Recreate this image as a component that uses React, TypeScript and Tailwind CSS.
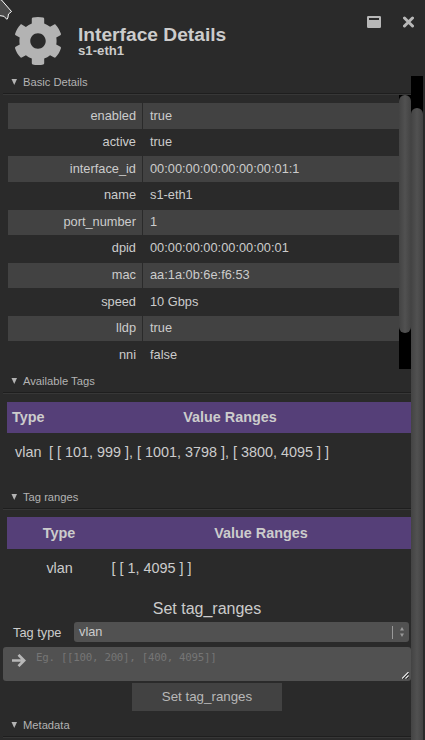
import React from "react";

const details: [string, string][] = [
  ["enabled", "true"],
  ["active", "true"],
  ["interface_id", "00:00:00:00:00:00:00:01:1"],
  ["name", "s1-eth1"],
  ["port_number", "1"],
  ["dpid", "00:00:00:00:00:00:00:01"],
  ["mac", "aa:1a:0b:6e:f6:53"],
  ["speed", "10 Gbps"],
  ["lldp", "true"],
  ["nni", "false"],
];

function SectionTitle({ children }: { children: React.ReactNode }) {
  return (
    <div className="ml-[3px] h-[19px] shrink-0 border-b border-[#373737]">
      <div className="flex h-[18px] items-start border-b border-[#1e1e1e] pl-[8px] text-[11.2px] leading-[13px] text-[#b3b3b3]">
        <svg className="mr-[6px] mt-[3px] h-[6px] w-[6px] shrink-0" viewBox="0 0 6 6">
          <path d="M0.500 0H6L3.250 6Z" fill="#b3b3b3" />
        </svg>
        <span>{children}</span>
      </div>
    </div>
  );
}

function Thumb({ className }: { className: string }) {
  return (
    <div
      className={
        "w-[12px] bg-linear-to-r from-[#434343] via-[#515151] to-[#434343] " + className
      }
    />
  );
}

export default function App() {
  return (
    <div
      className="relative flex h-[740px] w-[425px] flex-col overflow-hidden bg-[#2a2a2a] text-[#cccccc]"
      style={{ fontFamily: '"Liberation Sans", Arial, sans-serif' }}
    >
      <svg className="absolute left-0 top-0 h-[22px] w-[14px]" viewBox="0 0 14 22">
        <path d="M-1 -1L1.5 0L11.500 11.500L8.500 14L7.800 18L6.800 19.300L4 16.300L-1 15.500Z" fill="#4a4a4a" stroke="#fff" strokeWidth="1" />
      </svg>

      <header className="flex h-[76px] shrink-0">
        <svg className="ml-[15px] mt-[17px] h-[48px] w-[46px]" viewBox="18.6 8 475 496" preserveAspectRatio="none">
          <path
            fill="#b3b3b3"
            d="M487.4 315.7l-42.6-24.6c4.3-23.2 4.3-47 0-70.2l42.6-24.6c4.9-2.8 7.1-8.6 5.5-14-11.1-35.6-30-67.8-54.7-94.6-3.800-4.100-10-5.100-14.800-2.300L380.800 110c-17.900-15.400-38.500-27.300-60.800-35.100V25.800c0-5.600-3.900-10.500-9.400-11.700-36.700-8.200-74.300-7.800-109.200 0-5.500 1.200-9.400 6.100-9.400 11.700V75c-22.200 7.900-42.800 19.800-60.800 35.100L88.700 85.500c-4.900-2.800-11-1.900-14.800 2.300-24.700 26.700-43.600 58.900-54.700 94.600-1.700 5.400.6 11.200 5.500 14L67.300 221c-4.300 23.200-4.300 47 0 70.200l-42.600 24.600c-4.900 2.800-7.100 8.600-5.500 14 11.100 35.600 30 67.800 54.700 94.600 3.800 4.100 10 5.100 14.800 2.300l42.600-24.600c17.900 15.400 38.500 27.300 60.800 35.100v49.200c0 5.600 3.900 10.500 9.400 11.700 36.700 8.200 74.300 7.800 109.200 0 5.500-1.200 9.400-6.100 9.400-11.700v-49.200c22.200-7.900 42.800-19.800 60.800-35.100l42.600 24.600c4.900 2.800 11 1.900 14.800-2.300 24.700-26.700 43.600-58.900 54.700-94.600 1.500-5.500-.7-11.300-5.600-14.100zM256 336c-44.100 0-80-35.900-80-80s35.900-80 80-80 80 35.900 80 80-35.900 80-80 80z"
          />
        </svg>
        <div className="ml-[17px] mt-[25px] flex-1 font-bold">
          <h1 className="text-[19.2px] leading-[19px]">Interface Details</h1>
          <h2 className="text-[13.2px] leading-[13px]">s1-eth1</h2>
        </div>
        <svg className="mt-[15px] h-[13px] w-[14px]" viewBox="0 0 14 13">
          <path fillRule="evenodd" fill="#b8b8b8" d="M1.300 1H12.700Q14 1 14 2.300V11.700Q14 13 12.700 13H1.300Q0 13 0 11.700V2.300Q0 1 1.300 1ZM2 3V5H12V3Z" />
        </svg>
        <svg className="ml-[22px] mr-[11px] mt-[16px] h-[12px] w-[11px]" viewBox="0 0 11 12">
          <path d="M1.500 2L9.500 10M9.500 2L1.500 10" stroke="#b8b8b8" strokeWidth="3" strokeLinecap="round" />
        </svg>
      </header>

      <div className="flex min-h-0 flex-1">
        <main className="flex w-[411px] shrink-0 flex-col">
          <SectionTitle>Basic Details</SectionTitle>
          <section className="mb-[6px] flex h-[274px] shrink-0">
            <dl className="flex flex-1 flex-col gap-[1.09px] pl-[8px] pt-[8.2px] text-[12.8px]">
              {details.map(([key, value], i) => (
                <div key={key} className="flex h-[25.5px] shrink-0 gap-px leading-[25px]">
                  <dt className={"w-[134px] pr-[6px] text-right " + (i % 2 ? "" : "bg-[#424242]")}>
                    <span className="-mt-[0.66px] block">{key}</span>
                  </dt>
                  <dd className={"flex-1 pl-[7px] " + (i % 2 ? "" : "bg-[#424242]")}>
                    <span className="-mt-[0.66px] block">{value}</span>
                  </dd>
                </div>
              ))}
            </dl>
            <div className="w-[12px] bg-black">
              <Thumb className="h-[238px] rounded-[6px]" />
            </div>
          </section>

          <SectionTitle>Available Tags</SectionTitle>
          <section className="h-[97px] shrink-0 pl-[7px] pt-[8px] text-[14.4px]">
            <div className="flex h-[31px] items-center bg-[#553f78] font-bold">
              <div className="w-[42px] pl-[5px]">Type</div>
              <div className="flex-1 text-center">Value Ranges</div>
            </div>
            <div className="flex h-[39px] items-center">
              <div className="w-[42px] pl-[8px]">vlan</div>
              <div>[ [ 101, 999 ], [ 1001, 3798 ], [ 3800, 4095 ] ]</div>
            </div>
          </section>

          <SectionTitle>Tag ranges</SectionTitle>
          <section className="h-[209px] shrink-0 pt-[7px]">
            <div className="ml-[7px] text-[14.4px]">
              <div className="flex h-[32px] items-center bg-[#553f78] pt-px font-bold">
                <div className="w-[104px] text-center">Type</div>
                <div className="flex-1 text-center">Value Ranges</div>
              </div>
              <div className="flex h-[38px] items-center pt-[2px]">
                <div className="w-[104.6px] pl-[0.6px] text-center">vlan</div>
                <div>[ [ 1, 4095 ] ]</div>
              </div>
            </div>
            <h3 className="mt-[12px] pl-[3px] text-center text-[16px] leading-[19px]">Set tag_ranges</h3>
            <div className="mt-[4px] flex h-[20px] items-center pl-[13px] pr-[2px]">
              <label className="w-[61px] pt-[2px] text-[12.8px]">Tag type</label>
              <div className="flex h-[20px] flex-1 items-center rounded-[3px] bg-[#515151] pl-[5px] pr-[5px] text-[12.8px]">
                <span className="flex-1">vlan</span>
                <span className="h-[13px] w-px bg-[#999999]" />
                <svg className="ml-[7px] h-[10px] w-[4px]" viewBox="0 0 4 10">
                  <path d="M0 3.500L2 0L4 3.500ZM0 6.500H4L2 10Z" fill="#999" />
                </svg>
              </div>
            </div>
            <div className="relative ml-[3px] mt-[5px] flex h-[34px] rounded-[3px] bg-[#515151]">
              <svg className="ml-[9px] mt-[7px] h-[13px] w-[14px]" viewBox="0 0 14 13">
                <path d="M0 6.500H12M6.500 0.900L12.100 6.500L6.500 12.100" fill="none" stroke="#b8b8b8" strokeWidth="2.700" />
              </svg>
              <span
                className="ml-[10px] mt-[4px] text-[10.8px] leading-[13px] tracking-[-0.28px] text-[#757575]"
                style={{ fontFamily: '"DejaVu Sans Mono", monospace' }}
              >
                Eg. [[100, 200], [400, 4095]]
              </span>
              <svg className="absolute bottom-[2px] right-[2px] h-[7px] w-[7px]" viewBox="0 0 7 7">
                <path d="M0 6.500L6.500 0M3.500 6.500L6.500 3.500" stroke="#eee" strokeWidth="1.100" />
                <path d="M1 7.300L7.300 1M4.500 7.300L7.300 4.500" stroke="#111" strokeWidth="0.800" />
              </svg>
            </div>
            <button className="ml-[132px] mt-[2px] block h-[28px] w-[150px] bg-[#424242] text-[13.333px] leading-[28px] text-[#b8b8b8]">
              Set tag_ranges
            </button>
          </section>

          <SectionTitle>Metadata</SectionTitle>
        </main>
        <div className="flex w-[12px] shrink-0 flex-col bg-black pt-[32px]">
          <Thumb className="flex-1 rounded-t-[6px]" />
        </div>
      </div>
    </div>
  );
}
